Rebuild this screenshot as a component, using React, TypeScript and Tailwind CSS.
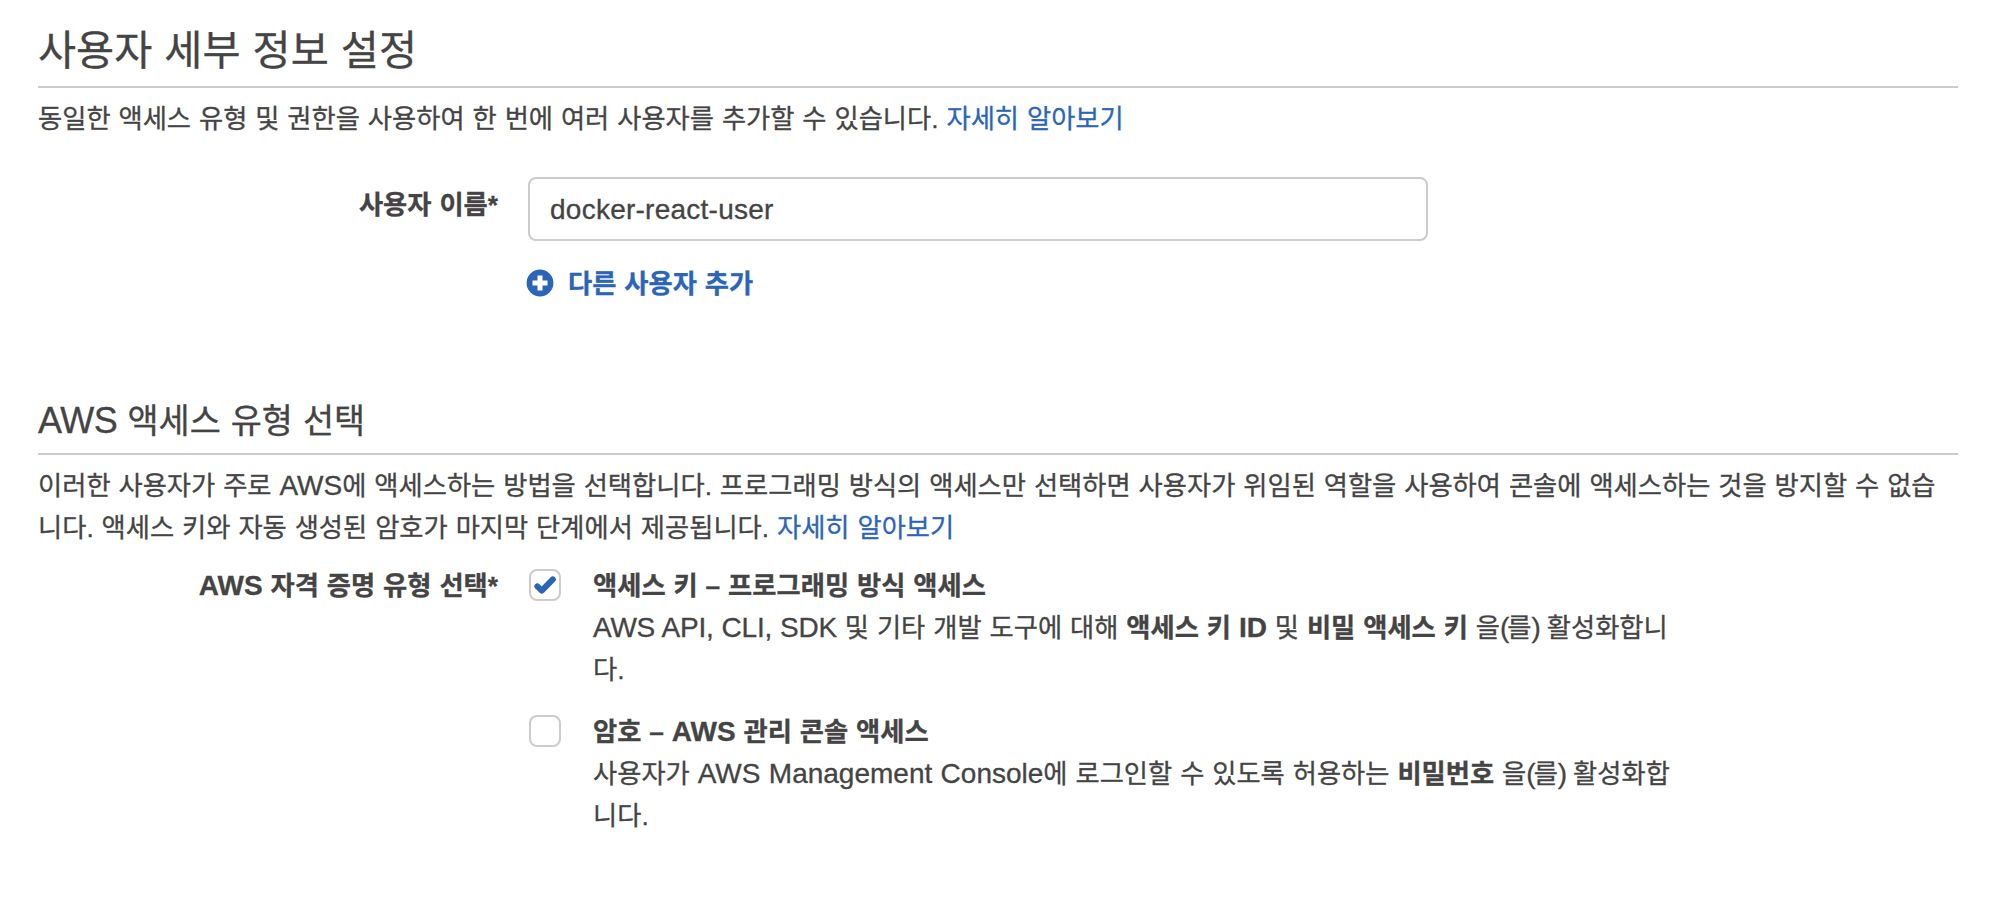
import React from 'react';

const Latin = ({ children }: { children: React.ReactNode }) => (
  <span className="text-[28px] leading-none">{children}</span>
);

const Checkbox = ({ checked }: { checked?: boolean }) => (
  <span
    role="checkbox"
    aria-checked={!!checked}
    className="flex w-8 h-8 shrink-0 items-center justify-center rounded-lg border-2 border-[#cccccc] bg-white"
  >
    {checked && (
      <svg viewBox="0 0 22 18" className="w-[22px] h-[18px]" fill="none">
        <path
          d="M3.4 10.4 L7.8 14.6 L18.8 3.4"
          stroke="#2a65b7"
          strokeWidth="6"
          strokeLinecap="round"
          strokeLinejoin="round"
        />
      </svg>
    )}
  </span>
);

// object particle, printed as 을(를) after either noun form
const Particle = () => (
  <>
    을<span className="text-[28px] leading-none tracking-[-2px]">(</span>를
    <span className="text-[28px] leading-none tracking-[-2px]">)</span>
  </>
);

const App = () => {
  const options = [
    {
      checked: true,
      title: '액세스 키 – 프로그래밍 방식 액세스',
      description: (
        <>
          <span className="text-[28px] leading-none tracking-[-0.25px]">AWS API, CLI, SDK</span> 및
          기타 개발 도구에 대해{' '}
          <b>
            액세스 키 <Latin>ID</Latin>
          </b>{' '}
          및 <b>비밀 액세스 키</b> <Particle /> 활성화합니
          <br />
          다.
        </>
      ),
    },
    {
      checked: false,
      title: (
        <>
          암호 – <Latin>AWS</Latin> 관리 콘솔 액세스
        </>
      ),
      description: (
        <>
          사용자가 <Latin>AWS Management Console</Latin>에 로그인할 수 있도록 허용하는{' '}
          <b>비밀번호</b> <Particle /> 활성화합
          <br />
          니다.
        </>
      ),
    },
  ];

  return (
    <div className="h-[912px] overflow-hidden bg-white px-[38px] pt-[18px] font-['Liberation_Sans','Noto_Sans_CJK_KR',sans-serif] text-[26.3px] leading-[42px] [word-spacing:0.6px] [-webkit-text-stroke:0.3px] whitespace-nowrap text-[#444444]">
      {/* User details */}
      <section>
        <h1 className="h-[70px] border-b-2 border-[#cccccc] text-[41.4px] leading-[66px]">
          사용자 세부 정보 설정
        </h1>
        <p className="mt-[10px]">
          동일한 액세스 유형 및 권한을 사용하여 한 번에 여러 사용자를 추가할 수 있습니다.{' '}
          <a className="text-[#2a65b7]">자세히 알아보기</a>
        </p>

        <div className="mt-[37px] flex">
          <label className="mt-[7px] w-[460px] text-right font-bold">사용자 이름*</label>
          <div className="ml-[30px]">
            <input
              type="text"
              defaultValue="docker-react-user"
              className="block h-16 w-[900px] rounded-lg border-2 border-[#cccccc] px-5 pt-[2px] text-[28px] tracking-[0.25px] outline-none"
            />
            <a className="mt-[22px] flex items-center font-bold text-[#2a65b7]">
              <svg viewBox="0 0 28 28" className="-ml-[2px] mr-[14px] mb-[3px] w-7 h-7">
                <circle cx="14" cy="14" r="13.4" fill="#2a65b7" />
                <path d="M14 6.5 V21.5 M6.5 14 H21.5" stroke="#fff" strokeWidth="5" />
              </svg>
              다른 사용자 추가
            </a>
          </div>
        </div>
      </section>

      {/* Access type */}
      <section className="mt-[86px]">
        <h2 className="h-[64px] border-b-2 border-[#cccccc] text-[33.8px] leading-[60px]">
          <span className="text-[36px] leading-none tracking-[-0.4px]">AWS</span> 액세스 유형 선택
        </h2>
        <p className="mt-[10px]">
          이러한 사용자가 주로 <Latin>AWS</Latin>에 액세스하는 방법을 선택합니다. 프로그래밍 방식의
          액세스만 선택하면 사용자가 위임된 역할을 사용하여 콘솔에 액세스하는 것을 방지할 수 없습
          <br />
          니다. 액세스 키와 자동 생성된 암호가 마지막 단계에서 제공됩니다.{' '}
          <a className="text-[#2a65b7]">자세히 알아보기</a>
        </p>

        <div className="mt-4 flex">
          <div className="w-[460px] text-right font-bold">
            <Latin>AWS</Latin> 자격 증명 유형 선택*
          </div>
          <div className="ml-[31px] flex flex-col gap-5">
            {options.map((option, index) => (
              <div key={index} className="flex gap-8">
                <div className="pt-1">
                  <Checkbox checked={option.checked} />
                </div>
                <div>
                  <div className="font-bold">{option.title}</div>
                  <p>{option.description}</p>
                </div>
              </div>
            ))}
          </div>
        </div>
      </section>
    </div>
  );
};

export default App;
